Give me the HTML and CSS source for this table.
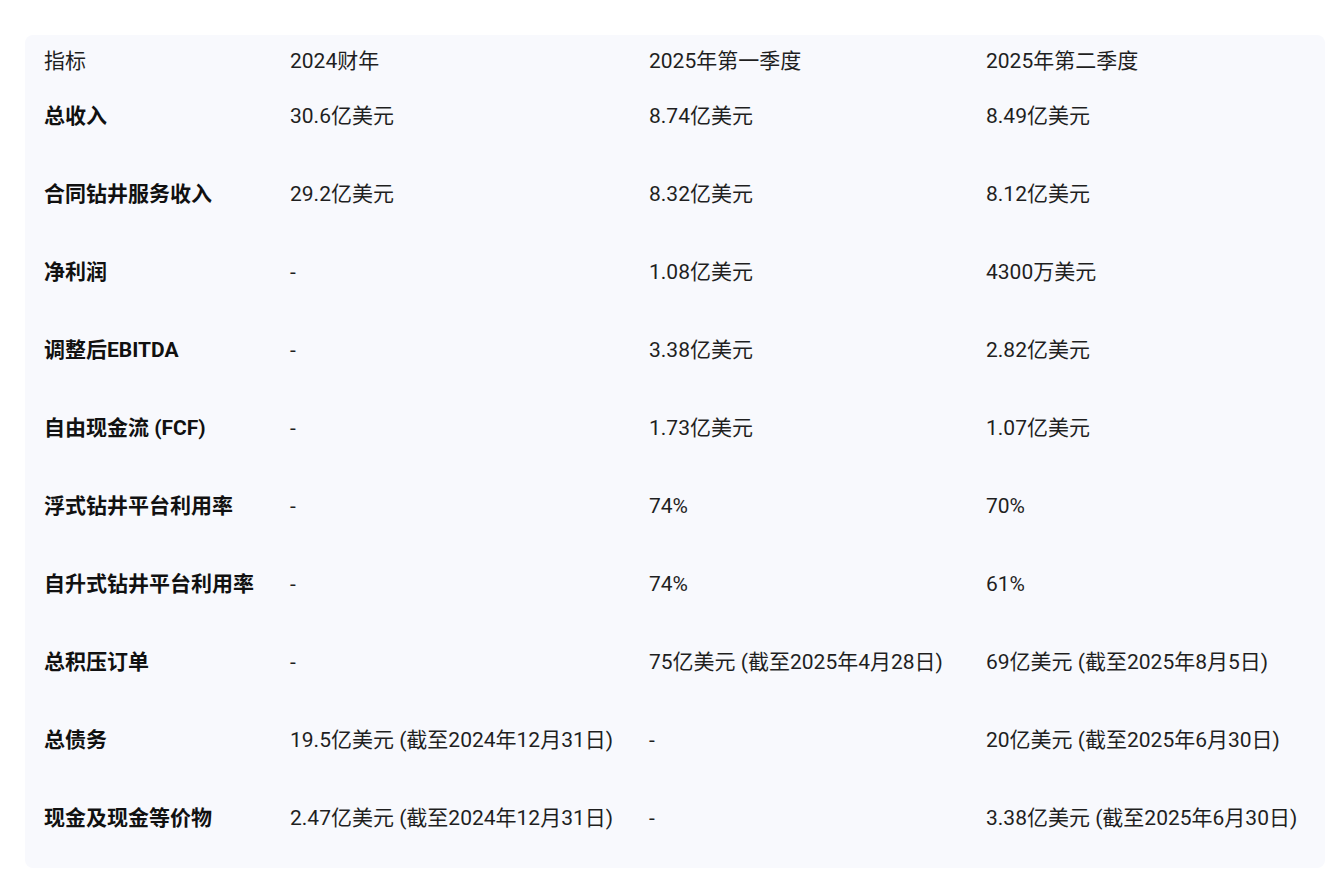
FILE: index.html
```html
<!DOCTYPE html>
<html lang="zh-CN">
<head>
<meta charset="utf-8">
<title>财务指标</title>
<link rel="stylesheet" href="styles.css">
</head>
<body>
<div class="page">
  <div class="panel">
    <div class="grid">
      <div class="cell head">指标</div>
      <div class="cell head">2024财年</div>
      <div class="cell head">2025年第一季度</div>
      <div class="cell head">2025年第二季度</div>

      <div class="cell label">总收入</div>
      <div class="cell">30.6亿美元</div>
      <div class="cell">8.74亿美元</div>
      <div class="cell">8.49亿美元</div>

      <div class="cell label">合同钻井服务收入</div>
      <div class="cell">29.2亿美元</div>
      <div class="cell">8.32亿美元</div>
      <div class="cell">8.12亿美元</div>

      <div class="cell label">净利润</div>
      <div class="cell">-</div>
      <div class="cell">1.08亿美元</div>
      <div class="cell">4300万美元</div>

      <div class="cell label">调整后EBITDA</div>
      <div class="cell">-</div>
      <div class="cell">3.38亿美元</div>
      <div class="cell">2.82亿美元</div>

      <div class="cell label">自由现金流 (FCF)</div>
      <div class="cell">-</div>
      <div class="cell">1.73亿美元</div>
      <div class="cell">1.07亿美元</div>

      <div class="cell label">浮式钻井平台利用率</div>
      <div class="cell">-</div>
      <div class="cell">74%</div>
      <div class="cell">70%</div>

      <div class="cell label">自升式钻井平台利用率</div>
      <div class="cell">-</div>
      <div class="cell">74%</div>
      <div class="cell">61%</div>

      <div class="cell label">总积压订单</div>
      <div class="cell">-</div>
      <div class="cell">75亿美元 (截至2025年4月28日)</div>
      <div class="cell">69亿美元 (截至2025年8月5日)</div>

      <div class="cell label">总债务</div>
      <div class="cell">19.5亿美元 (截至2024年12月31日)</div>
      <div class="cell">-</div>
      <div class="cell">20亿美元 (截至2025年6月30日)</div>

      <div class="cell label last">现金及现金等价物</div>
      <div class="cell last">2.47亿美元 (截至2024年12月31日)</div>
      <div class="cell last">-</div>
      <div class="cell last">3.38亿美元 (截至2025年6月30日)</div>
    </div>
  </div>
</div>
</body>
</html>
```

FILE: styles.css
```css
html, body {
  margin: 0;
  padding: 0;
  background: #ffffff;
}

body {
  font-family: Roboto, "Noto Sans CJK SC", sans-serif;
  color: #1f1f1f;
  font-size: 21px;
}

.page {
  padding: 35px 13px 0 25px;
}

.panel {
  width: 1300px;
  background: #f8f9fd;
  border-radius: 8px;
  padding-left: 19px;
  box-sizing: border-box;
}

.grid {
  display: grid;
  grid-template-columns: 246px 359px 337px 1fr;
}

.cell {
  line-height: 28px;
  padding: 12px 0 38px;
  white-space: nowrap;
}

.cell.head {
  padding: 12px 0 15px;
}

.cell.label {
  font-weight: 700;
  color: #111111;
}

.cell.last {
  padding-bottom: 36px;
}
```
